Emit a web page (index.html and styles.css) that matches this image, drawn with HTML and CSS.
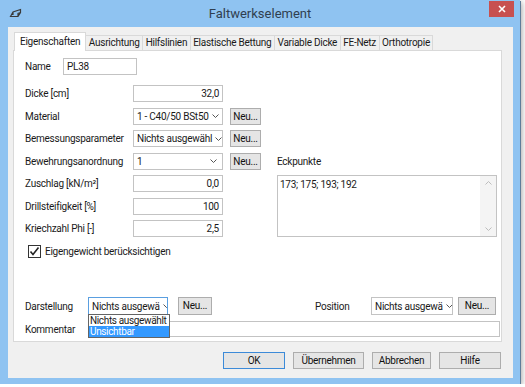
FILE: index.html
```html
<!DOCTYPE html>
<html lang="de">
<head>
  <meta charset="UTF-8">
  <title>Faltwerkselement</title>
  <link rel="stylesheet" href="styles.css">
</head>
<body>

  <div class="window">
    <div class="titlebar">
      <svg class="app-icon" width="13" height="10" viewBox="0 0 13 10">
        <path d="M1.5 8.5 L4 4 L11.5 1.5 L11.5 4.5 L9 8.5 Z M4 4 L4 7 M9 8.5 L9 5.5 L11.5 4.5" fill="none" stroke="#3a3a3a" stroke-width="1.2"/>
      </svg>
      <div class="title">Faltwerkselement</div>
      <div class="close">
        <svg width="8" height="8" viewBox="0 0 8 8"><path d="M1 1 L7 7 M7 1 L1 7" stroke="#fff" stroke-width="1.6"/></svg>
      </div>
    </div>

    <div class="client">
      <!-- tab strip -->
      <div class="tabs">
        <div class="tab active">Eigenschaften</div>
        <div class="tab">Ausrichtung</div>
        <div class="tab">Hilfslinien</div>
        <div class="tab">Elastische Bettung</div>
        <div class="tab">Variable Dicke</div>
        <div class="tab">FE-Netz</div>
        <div class="tab">Orthotropie</div>
      </div>

      <div class="panel">
        <div class="name-row">
          <span class="name-label">Name</span>
          <div class="input name-input">PL38</div>
        </div>

        <div class="form-grid">
          <span>Dicke [cm]</span>
          <div class="input num">32,0</div>
          <span></span><span></span>

          <span>Material</span>
          <div class="select"><span>1 - C40/50 BSt50</span><svg class="chev" width="7" height="4" viewBox="0 0 7 4"><path d="M0.5 0.5 L3.5 3.5 L6.5 0.5" fill="none" stroke="#555"/></svg></div>
          <div class="btn">Neu...</div>
          <span></span>

          <span>Bemessungsparameter</span>
          <div class="select"><span>Nichts ausgewähl</span><svg class="chev" width="7" height="4" viewBox="0 0 7 4"><path d="M0.5 0.5 L3.5 3.5 L6.5 0.5" fill="none" stroke="#555"/></svg></div>
          <div class="btn">Neu...</div>
          <span></span>

          <span>Bewehrungsanordnung</span>
          <div class="select"><span>1</span><svg class="chev" width="7" height="4" viewBox="0 0 7 4"><path d="M0.5 0.5 L3.5 3.5 L6.5 0.5" fill="none" stroke="#555"/></svg></div>
          <div class="btn">Neu...</div>
          <span class="right-col">Eckpunkte</span>

          <span>Zuschlag [kN/m²]</span>
          <div class="input num">0,0</div>
          <span></span>
          <div class="textarea right-col">
            <div class="text">173; 175; 193; 192</div>
            <div class="scrollbar">
              <svg width="7" height="4" viewBox="0 0 7 4"><path d="M0.5 3.5 L3.5 0.5 L6.5 3.5" fill="none" stroke="#bdbdbd"/></svg>
              <svg width="7" height="4" viewBox="0 0 7 4"><path d="M0.5 0.5 L3.5 3.5 L6.5 0.5" fill="none" stroke="#bdbdbd"/></svg>
            </div>
          </div>

          <span>Drillsteifigkeit [%]</span>
          <div class="input num">100</div>
          <span></span>

          <span>Kriechzahl Phi [-]</span>
          <div class="input num">2,5</div>
          <span></span>

          <div class="check-row">
            <svg width="13" height="13" viewBox="0 0 13 13">
              <rect x="0.5" y="0.5" width="12" height="12" fill="#fff" stroke="#333"/>
              <path d="M2.5 6.5 L5 9.5 L10.5 2.5" fill="none" stroke="#222" stroke-width="1.6"/>
            </svg>
            <span>Eigengewicht berücksichtigen</span>
          </div>
        </div>

        <div class="spacer"></div>

        <div class="bottom-row">
          <span class="wide-label">Darstellung</span>
          <div class="combo-wrap">
            <div class="select focused"><span>Nichts ausgewä</span><svg class="chev" width="7" height="4" viewBox="0 0 7 4"><path d="M0.5 0.5 L3.5 3.5 L6.5 0.5" fill="none" stroke="#555"/></svg></div>
            <div class="dropdown">
              <div class="item">Nichts ausgewählt</div>
              <div class="item selected">Unsichtbar</div>
            </div>
          </div>
          <div class="btn neu-a">Neu...</div>
          <span class="pos-label">Position</span>
          <div class="select pos-select"><span>Nichts ausgewä</span><svg class="chev" width="7" height="4" viewBox="0 0 7 4"><path d="M0.5 0.5 L3.5 3.5 L6.5 0.5" fill="none" stroke="#555"/></svg></div>
          <div class="btn neu-b">Neu...</div>
        </div>

        <div class="comment-row">
          <span class="wide-label">Kommentar</span>
          <div class="input comment-input"></div>
        </div>
      </div>

      <div class="actions">
        <div class="btn action default">OK</div>
        <div class="btn action wide">Übernehmen</div>
        <div class="btn action cancel">Abbrechen</div>
        <div class="btn action">Hilfe</div>
      </div>
    </div>
  </div>

</body>
</html>
```

FILE: styles.css
```css
:root {
  --frame: #8fc3f1;
  --face: #f0f0f0;
  --line: #d9d9d9;
  --field-border: #c3c3c3;
  --btn-border: #adadad;
}
* {
  box-sizing: border-box;
}
body {
  margin: 0;
  background: #fff;
  font-family: Roboto, "Liberation Sans", Arial, sans-serif;
  font-size: 10px;
  letter-spacing: -0.25px;
  color: #1a1a1a;
}
.window {
  width: 520px;
  height: 384px;
  background: var(--frame);
  display: flex;
  flex-direction: column;
  box-shadow: 1px 1px 0 #5d7c99, 2px 2px 6px rgba(0,0,0,0.35);
}
.titlebar {
  height: 27px;
  display: grid;
  grid-template-columns: 1fr auto 1fr;
  align-items: start;
}
.app-icon {
  margin: 8px 0 0 9px;
}
.title {
  font-size: 13px;
  letter-spacing: 0;
  color: #2f3f50;
  padding-top: 6px;
}
.close {
  justify-self: end;
  margin: 1px 6px 0 0;
  width: 25px;
  height: 16px;
  background: #c75050;
  display: flex;
  align-items: center;
  justify-content: center;
}
.client {
  flex: 1;
  margin: 0 7px 6px 8px;
  background: var(--face);
  display: flex;
  flex-direction: column;
}

/* tabs */
.tabs {
  display: flex;
  align-items: flex-end;
  height: 23px;
  padding: 5px 0 0 6px;
}
.tab {
  height: 15px;
  padding: 0 2.5px;
  line-height: 14px;
  background: var(--face);
  border: 1px solid var(--line);
  border-left: none;
  border-bottom: none;
}
.tab.active {
  height: 19px;
  padding: 0 5px;
  line-height: 17px;
  background: #fff;
  border-left: 1px solid var(--line);
  margin-bottom: -1px;
  position: relative;
  z-index: 1;
}
.panel {
  flex: 1;
  margin: 0 11px 0 5px;
  background: #fff;
  border: 1px solid var(--line);
  padding: 7px 1px 4px 11px;
  display: flex;
  flex-direction: column;
}

/* fields */
.input, .select {
  height: 17px;
  border: 1px solid var(--field-border);
  background: #fff;
  padding: 0 3px;
  line-height: 15px;
  white-space: nowrap;
  overflow: hidden;
}
.num {
  text-align: right;
}
.select {
  display: flex;
  align-items: center;
  justify-content: space-between;
}
.select .chev {
  flex: none;
  margin: 0 2px 0 3px;
}
.select.focused {
  border-color: #5a9fe0;
}
.btn {
  height: 17px;
  border: 1px solid var(--btn-border);
  background: #e5e5e5;
  text-align: center;
  line-height: 15px;
  color: #111;
}
.name-row {
  display: flex;
  align-items: center;
  height: 17px;
}
.name-label {
  width: 38px;
}
.name-input {
  width: 74px;
}
.form-grid {
  margin-top: 10px;
  display: grid;
  grid-template-columns: 101px 90px 31px 229px;
  grid-auto-rows: 17px;
  column-gap: 7px;
  row-gap: 5.5px;
  align-items: center;
}
.right-col {
  margin-left: 9px;
}
.textarea {
  grid-column: 4;
  grid-row: 5 / span 3;
  align-self: stretch;
  border: 1px solid var(--field-border);
  background: #fff;
  display: flex;
}
.textarea .text {
  flex: 1;
  padding: 3px 2px;
}
.scrollbar {
  width: 16px;
  background: #f4f4f4;
  display: flex;
  flex-direction: column;
  justify-content: space-between;
  align-items: center;
  padding: 5px 0;
}
.check-row {
  grid-column: 1 / -1;
  display: flex;
  align-items: center;
  gap: 4px;
  padding-left: 3px;
}
.spacer {
  flex: 1;
}

/* lower rows */
.bottom-row {
  display: flex;
  align-items: center;
  height: 18px;
  padding-right: 4px;
}
.wide-label {
  width: 63px;
  flex: none;
}
.combo-wrap {
  position: relative;
  width: 80px;
}
.combo-wrap .select {
  height: 18px;
}
.dropdown {
  position: absolute;
  top: 17px;
  left: 0;
  width: 82px;
  border: 1px solid #646464;
  background: #fff;
  z-index: 2;
}
.dropdown .item {
  height: 11px;
  line-height: 11px;
  padding-left: 1px;
  letter-spacing: -0.35px;
  white-space: nowrap;
}
.dropdown .item.selected {
  background: #3399ff;
  color: #fff;
}
.neu-a {
  width: 34px;
  height: 18px;
  margin-left: 10px;
}
.pos-label {
  margin-left: auto;
  width: 56px;
}
.pos-select {
  width: 82px;
  height: 18px;
}
.neu-b {
  width: 38px;
  height: 18px;
  margin-left: 5px;
}
.comment-row {
  display: flex;
  align-items: center;
  margin-top: 6px;
}
.comment-input {
  flex: 1;
  height: 16px;
}

/* dialog buttons */
.actions {
  display: flex;
  justify-content: flex-end;
  gap: 8px;
  margin: 10px 12px 9px 0;
}
.action {
  width: 62px;
}
.action.wide {
  width: 71px;
}
.action.cancel {
  width: 59px;
}
.action.default {
  border-color: #3c8ad8;
}
```
